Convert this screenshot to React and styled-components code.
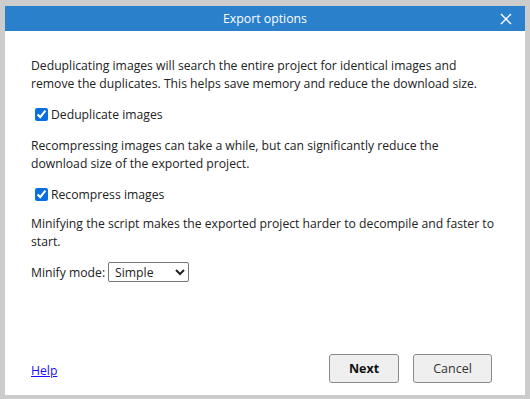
import React from "react";
import styled, { createGlobalStyle } from "styled-components";

const GlobalStyle = createGlobalStyle`
  html, body {
    margin: 0;
    padding: 0;
    background: #cccccc;
  }
  body {
    font-family: "Open Sans", "Noto Sans", sans-serif;
    font-size: 12.2px;
    color: #222;
  }
`;

const Frame = styled.div`
  box-sizing: border-box;
  width: 530px;
  height: 399px;
  padding: 6px 5px 4px 5px;
  background: #cccccc;
`;

const Dialog = styled.div`
  height: 100%;
  display: flex;
  flex-direction: column;
  background: #fff;
`;

const TitleBar = styled.header`
  height: 25px;
  display: flex;
  align-items: center;
  justify-content: center;
  position: relative;
  background: #2b80cc;
  color: #fff;
  font-size: 12.3px;
`;

const CloseButton = styled.button`
  position: absolute;
  right: 13px;
  top: 7px;
  width: 12px;
  height: 12px;
  padding: 0;
  border: none;
  background: none;
  display: flex;
  align-items: center;
  justify-content: center;
`;

const Body = styled.div`
  flex: 1;
  display: flex;
  flex-direction: column;
  padding: 26px 26px 0 26px;
`;

const Paragraph = styled.p`
  margin: 0 0 ${(p) => p.$after ?? 13}px 0;
  line-height: 18px;
`;

const CheckRow = styled.label`
  display: flex;
  align-items: center;
  gap: 3px;
  margin: 0 0 ${(p) => p.$after ?? 15}px 4px;
  height: 16px;
`;

const Check = styled.input`
  width: 13px;
  height: 13px;
  margin: 0;
  accent-color: #0b6fe0;
`;

const SelectRow = styled.div`
  display: flex;
  align-items: center;
  gap: 3px;
  height: 20px;
`;

const Select = styled.select`
  width: 81px;
  height: 20px;
  font-family: inherit;
  font-size: 12.2px;
  border: 1px solid #767676;
  border-radius: 2px;
  background: #fff;
  padding: 0 2px;
  color: #222;
`;

const Footer = styled.footer`
  margin-top: auto;
  display: flex;
  align-items: center;
  padding: 0 33px 12px 26px;
`;

const HelpLink = styled.a`
  color: #1a0dff;
  text-decoration: underline;
  margin-right: auto;
  padding-top: 3px;
`;

const Button = styled.button`
  height: 29px;
  width: ${(p) => p.$width}px;
  margin-left: 14px;
  border: 1px solid #8a8a8a;
  border-radius: 3px;
  background: #efefef;
  font-family: inherit;
  font-size: 12.5px;
  font-weight: ${(p) => (p.$primary ? 700 : 400)};
  color: ${(p) => (p.$primary ? "#111" : "#333")};
`;

export default function App() {
  return (
    <>
      <GlobalStyle />
      <Frame>
        <Dialog>
          <TitleBar>
            Export options
            <CloseButton aria-label="Close">
              <svg width="12" height="12" viewBox="0 0 12 12">
                <path d="M1 1 L11 11 M11 1 L1 11" stroke="#fff" strokeWidth="1.4" />
              </svg>
            </CloseButton>
          </TitleBar>
          <Body>
            <Paragraph>
              Deduplicating images will search the entire project for identical images and
              <br />
              remove the duplicates. This helps save memory and reduce the download size.
            </Paragraph>
            <CheckRow>
              <Check type="checkbox" defaultChecked />
              Deduplicate images
            </CheckRow>
            <Paragraph>
              Recompressing images can take a while, but can significantly reduce the
              <br />
              download size of the exported project.
            </Paragraph>
            <CheckRow $after={13}>
              <Check type="checkbox" defaultChecked />
              Recompress images
            </CheckRow>
            <Paragraph $after={11}>
              Minifying the script makes the exported project harder to decompile and faster to
              <br />
              start.
            </Paragraph>
            <SelectRow>
              Minify mode:
              <Select defaultValue="simple">
                <option value="none">None</option>
                <option value="simple">Simple</option>
                <option value="advanced">Advanced</option>
              </Select>
            </SelectRow>
          </Body>
          <Footer>
            <HelpLink href="#">Help</HelpLink>
            <Button $primary $width={70}>Next</Button>
            <Button $width={79}>Cancel</Button>
          </Footer>
        </Dialog>
      </Frame>
    </>
  );
}
